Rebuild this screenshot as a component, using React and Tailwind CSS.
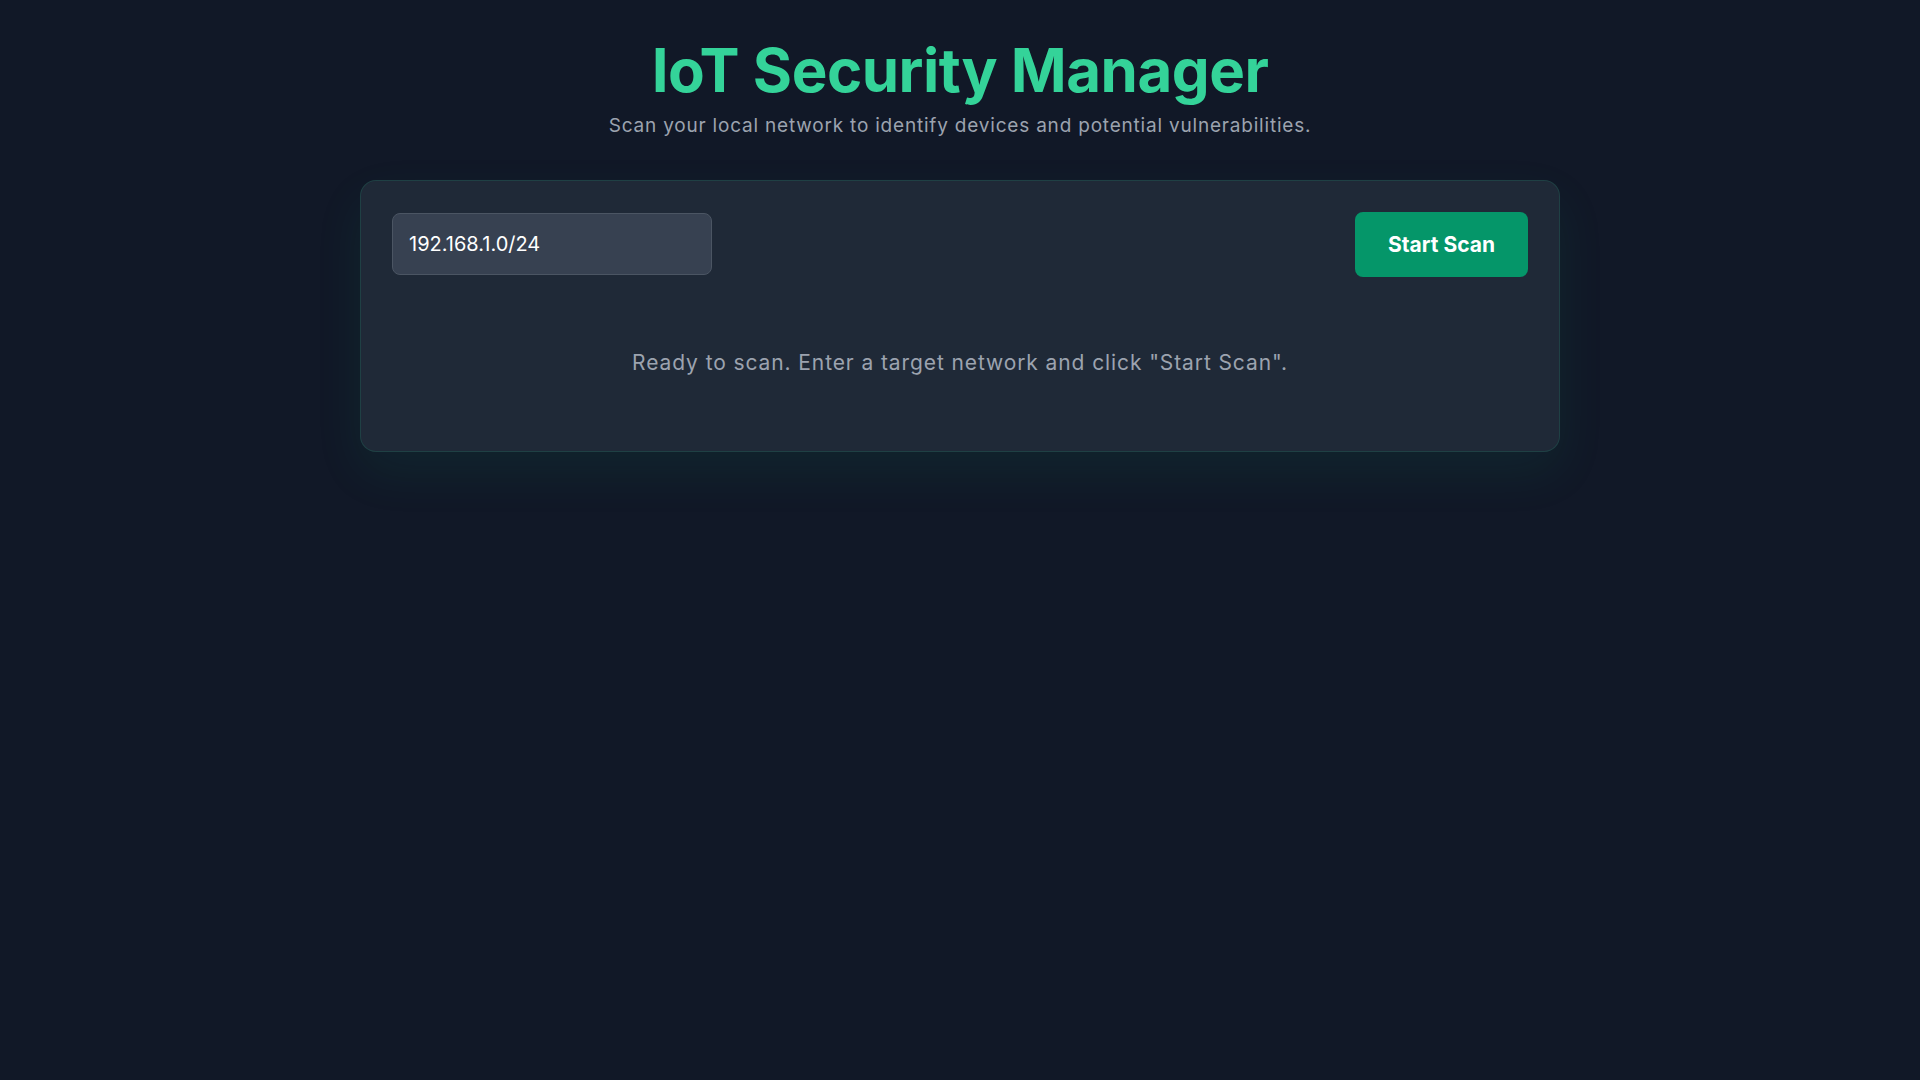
import { useState } from 'react';

const App = () => {
  const [target, setTarget] = useState('192.168.1.0/24');

  return (
    <div
      className="min-h-screen w-full bg-[#111827] text-gray-100"
      style={{ fontFamily: 'Inter, "Noto Sans", sans-serif' }}
    >
      <div className="mx-auto flex max-w-[1200px] flex-col items-center pt-[38px]">
        <h1 className="text-[60px] font-bold leading-[64px] tracking-[-0.5px] text-[#34d399]">
          IoT Security Manager
        </h1>
        <p className="mt-[10px] text-[19px] leading-[28px] tracking-[0.8px] text-[#9ca3af]">
          Scan your local network to identify devices and potential vulnerabilities.
        </p>

        <div className="mt-[40px] w-full rounded-2xl border border-[#1f4a4a]/70 bg-[#1f2937] p-[31px] shadow-[0_20px_50px_rgba(16,185,129,0.08)]">
          <div className="flex items-center justify-between">
            <input
              value={target}
              onChange={(e) => setTarget(e.target.value)}
              className="-mt-[1px] h-[62px] w-[320px] rounded-lg border border-[#4b5563] bg-[#374151] px-4 text-[20px] text-white outline-none"
            />
            <button className="h-[65px] rounded-lg bg-[#059669] px-[33px] text-[21px] font-bold text-white">
              Start Scan
            </button>
          </div>

          <div className="pb-[43px] pt-[72px] text-center text-[21px] leading-[28px] tracking-[0.9px] text-[#9ca3af]">
            Ready to scan. Enter a target network and click "Start Scan".
          </div>
        </div>
      </div>
    </div>
  );
};

export default App;
